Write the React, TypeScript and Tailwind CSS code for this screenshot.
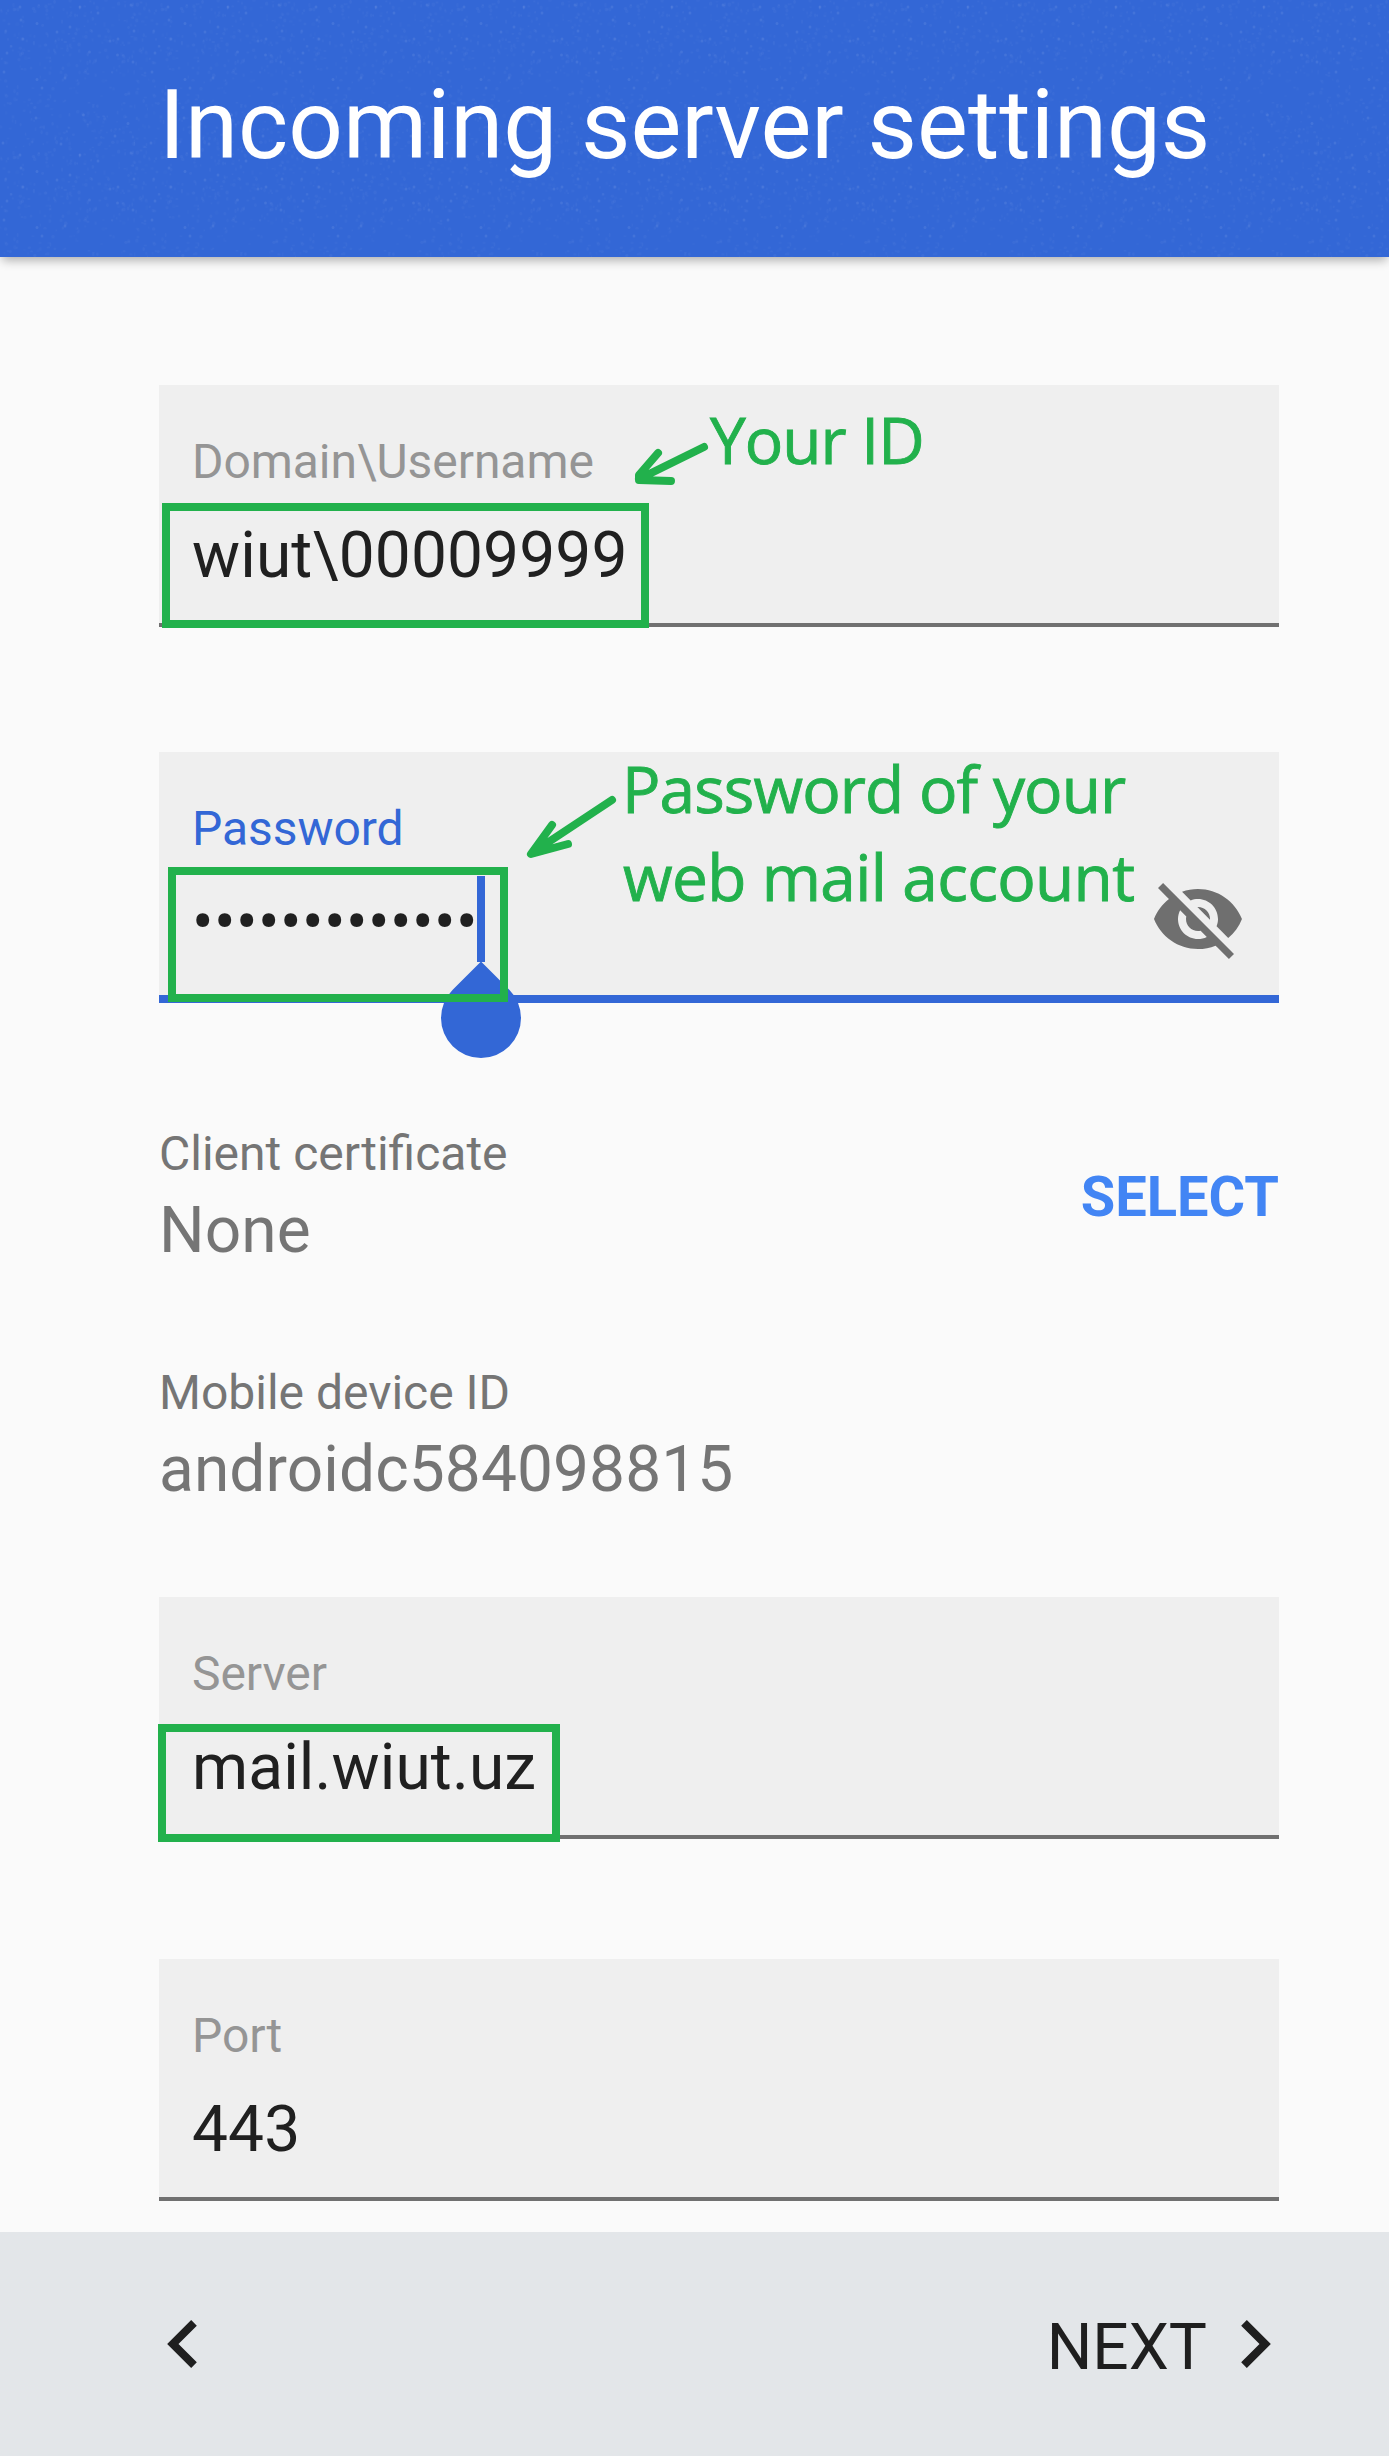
import type { ReactNode } from "react";

const TILE = 148;

// Bright paper-grain flecks of the header tile, as x, y pairs.
const FLECKS: [number, number][] = [
  [23, 39], [110, 41], [118, 39], [7, 53], [117.5, 55], [4, 72], [83.5, 115], [128, 123.5],
  [36, 118], [42, 88], [37, 79.5], [65, 78], [115, 136], [61, 144], [89.5, 52], [133, 62],
  [37, 23.5], [21, 20], [57, 32], [134, 31], [98, 13], [131, 5], [3, 143], [80, 7], [20, 7], [70, 27],
];

function buildGrain() {
  let seed = 20117;
  const rand = () => {
    seed = (seed * 16807) % 2147483647;
    return seed / 2147483647;
  };
  return Array.from({ length: 420 }, () => ({
    x: rand() * TILE,
    y: rand() * TILE,
    rx: 0.6 + rand() * 1.1,
    ry: 0.7 + rand() * 1.4,
    o: 0.01 + rand() * 0.028,
  }));
}

const GRAIN = buildGrain();

function HeaderTexture() {
  return (
    <svg className="absolute inset-0 h-full w-full" aria-hidden="true">
      <defs>
        <pattern id="grain" width={TILE} height={TILE} patternUnits="userSpaceOnUse">
          {GRAIN.map((g, i) => (
            <ellipse key={i} cx={g.x} cy={g.y} rx={g.rx} ry={g.ry} fill="#fff" opacity={g.o} />
          ))}
          {FLECKS.map(([x, y], i) => (
            <ellipse key={i} cx={x} cy={y} rx={1.4} ry={1.6} fill="#fff" opacity={0.08} />
          ))}
        </pattern>
      </defs>
      <rect width="100%" height="100%" fill="url(#grain)" />
    </svg>
  );
}

function Field({
  label,
  focused = false,
  className,
  value,
  children,
}: {
  label: string;
  focused?: boolean;
  className: string;
  value: ReactNode;
  children?: ReactNode;
}) {
  return (
    <div
      className={`relative w-[1120px] bg-[#efefef] px-[33px] pt-[49px] ${
        focused ? "h-[251px] border-b-8 border-[#3367d6]" : "h-[242px] border-b-4 border-[#707070]"
      } ${className}`}
    >
      <div className={`text-[48px] leading-[56px] tracking-[-0.06px] ${focused ? "text-[#3367d6]" : "text-[#959595]"}`}>{label}</div>
      <div className="mt-[26px] text-[64px] leading-[80px] tracking-[0.12px] text-[#202020]">{value}</div>
      {children}
    </div>
  );
}

function Info({ label, value }: { label: string; value: string }) {
  return (
    <div className="text-[#757575]">
      <div className="text-[48px] leading-[56px]">{label}</div>
      <div className="mt-[9px] text-[64px] leading-[80px] tracking-[0.1px]">{value}</div>
    </div>
  );
}

function Chevron({ flip = false }: { flip?: boolean }) {
  return (
    <svg width="30" height="48" viewBox="0 0 7.41 12" className={flip ? "-scale-x-100" : ""} fill="#1f1f1f">
      <path d="M7.41 1.41 6 0 0 6l6 6 1.41-1.41L2.83 6z" />
    </svg>
  );
}

const note =
  "absolute whitespace-nowrap font-['Open_Sans',sans-serif] text-[64px] leading-[88px] text-[#22b14c] [-webkit-text-stroke:0.9px_#22b14c]";
const box = "absolute border-8 border-[#22b14c]";

export default function App() {
  return (
    <div className="flex h-[2456px] w-[1389px] flex-col overflow-hidden bg-[#fafafa] font-[Roboto,sans-serif]">
      <header className="relative h-[257px] shrink-0 bg-[#3367d6] pt-[69px] pl-[159px] shadow-[0_5px_10px_-2px_rgba(0,0,0,0.32)]">
        <HeaderTexture />
        <h1 className="relative text-[96px] leading-[112px] tracking-[-0.05px] whitespace-nowrap text-white">
          Incoming server settings
        </h1>
      </header>

      <main className="flex w-[1279px] grow flex-col pl-[159px]">
        <Field label="Domain\Username" value="wiut\00009999" className="mt-32">
          <div className={`${box} top-[118px] left-[3px] h-[125px] w-[487px]`} />
          <svg className="absolute top-[49px] left-[465px]" width="90" height="56" fill="none" stroke="#22b14c" strokeWidth="8" strokeLinecap="round" strokeLinejoin="round">
            <path d="M80 13 15 45M34 19 15 41V46L47 47" />
          </svg>
          <div className={`${note} top-[11px] left-[551px] tracking-[-1px]`}>Your ID</div>
        </Field>

        <Field
          label="Password"
          focused
          value={<span className="tracking-[0.41px]">•••••••••••••</span>}
          className="mt-[125px]"
        >
          <div className="absolute top-[124px] left-[318px] h-[86px] w-2 bg-[#3367d6]" />
          <svg className="absolute top-[209px] left-[282px]" width="80" height="98" fill="#3367d6">
            <path d="M40 .4 11.7 28.7a40 40 0 1 0 56.6 0z" />
          </svg>
          <div className={`${box} top-[115px] left-[9px] h-[135px] w-[340px]`} />
          <svg className="absolute top-[37px] left-[360px]" width="104" height="76" fill="none" stroke="#22b14c" strokeWidth="8" strokeLinecap="round" strokeLinejoin="round">
            <path d="M93 11 22 58M33 36 12 65 49 55" />
          </svg>
          <div className={`${note} top-[-7px] left-[463px] tracking-[-0.9px]`}>Password of your</div>
          <div className={`${note} top-[81px] left-[464px] tracking-[-0.65px]`}>web mail account</div>
          <svg className="absolute top-[119px] left-[991px]" width="96" height="96" viewBox="0 0 24 24" fill="#6f6f6f">
            <path d="M12 7c2.76 0 5 2.24 5 5 0 .65-.13 1.26-.36 1.83l2.92 2.92c1.51-1.26 2.7-2.89 3.43-4.75-1.73-4.39-6-7.5-11-7.5-1.4 0-2.74.25-3.98.7l2.16 2.16C10.74 7.13 11.35 7 12 7zM2 4.27l2.28 2.28.46.46C3.08 8.3 1.78 10.02 1 12c1.73 4.39 6 7.5 11 7.5 1.55 0 3.03-.3 4.38-.84l.42.42L19.73 22 21 20.73 3.27 3 2 4.27zM7.53 9.8l1.55 1.55c-.05.21-.08.43-.08.65 0 1.66 1.34 3 3 3 .22 0 .44-.03.65-.08l1.55 1.55c-.67.33-1.41.53-2.2.53-2.76 0-5-2.24-5-5 0-.79.2-1.53.53-2.2zm4.31-.78 3.15 3.15.02-.16c0-1.66-1.34-3-3-3l-.17.01z" />
          </svg>
        </Field>

        <div className="mt-[123px] flex items-start justify-between">
          <Info label="Client certificate" value="None" />
          <button className="mt-[39px] text-[56px] leading-[64px] font-bold text-[#4285f4]">SELECT</button>
        </div>
        <div className="mt-[94px]">
          <Info label="Mobile device ID" value="androidc584098815" />
        </div>

        <Field label="Server" value="mail.wiut.uz" className="mt-[87px]">
          <div className={`${box} top-[127px] left-[-1px] h-[118px] w-[402px]`} />
        </Field>
        <Field label="Port" value="443" className="mt-[120px]" />
      </main>

      <footer className="flex h-56 shrink-0 items-center justify-between bg-[#e3e6e9] pr-[118px] pl-[167px]">
        <Chevron />
        <div className="flex items-center gap-[34px]">
          <span className="relative top-[4px] text-[64px] leading-[80px] text-[#1f1f1f]">NEXT</span>
          <Chevron flip />
        </div>
      </footer>
    </div>
  );
}
